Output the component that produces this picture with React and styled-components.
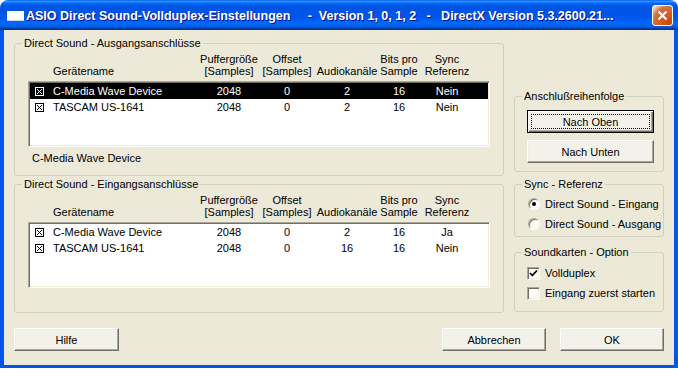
import React from 'react';
import styled, { createGlobalStyle } from 'styled-components';

const GlobalStyle = createGlobalStyle`
  html, body {
    margin: 0;
    padding: 0;
    background: #fff;
  }
  body {
    font-family: "Liberation Sans", Arial, sans-serif;
    font-size: 11px;
    color: #000;
  }
`;

const Window = styled.div`
  width: 678px;
  height: 368px;
  display: flex;
  flex-direction: column;
`;

const TitleBar = styled.div`
  height: 30px;
  flex: none;
  display: flex;
  align-items: center;
  padding: 1px 5px 0 7px;
  box-sizing: border-box;
  border-radius: 8px 8px 0 0;
  background: linear-gradient(to bottom, #0058ee 0%, #3593ff 4%, #288eff 6%, #127dff 8%, #036ffc 10%, #0262ee 14%, #0057e5 20%, #0054e3 24%, #0055eb 56%, #005bf5 66%, #026afe 76%, #0062ef 86%, #0052d6 92%, #0040ab 94%, #003092 100%);
`;

const TitleText = styled.div`
  flex: 1;
  margin-left: 2px;
  color: #fff;
  font-family: "Liberation Sans", Arial, sans-serif;
  font-weight: bold;
  font-size: 12.5px;
  white-space: pre;
  text-shadow: 1px 1px 0 #0f1089;
`;

const CloseButton = styled.div`
  width: 21px;
  height: 21px;
  box-sizing: border-box;
  border: 1px solid #fff;
  border-radius: 3px;
  display: flex;
  align-items: center;
  justify-content: center;
  background: radial-gradient(circle at 90% 90%, #cc4600 0%, #dc6527 55%, #cd7546 70%, #ffccb2 90%, #fff 100%);
`;

const Body = styled.div`
  flex: 1;
  display: flex;
  flex-direction: column;
  background: #ece9d8;
  border: solid #0055ea;
  border-width: 0 4px 3px 4px;
  padding: 7px 10px 14px 10px;
`;

const Main = styled.div`
  display: flex;
  gap: 10px;
  align-items: flex-start;
`;

const LeftColumn = styled.div`
  width: 490px;
  display: flex;
  flex-direction: column;
  gap: 2px;
`;

const RightColumn = styled.div`
  width: 150px;
  display: flex;
  flex-direction: column;
  margin-top: 53px;
`;

const Group = styled.fieldset`
  margin: ${p => p.$mt || 0}px 0 0 0;
  padding: 0;
  min-width: 0;
  border: 1px solid #d0d0bf;
  border-radius: 3px;
`;

const Legend = styled.legend`
  margin-left: 7px;
  padding: 0 2px;
  line-height: 13px;
`;

const GroupBody = styled.div`
  padding: ${p => p.$pad};
  display: flex;
  flex-direction: column;
`;

const columns = '20px 150px 58px 58px 62px 42px 54px';

const HeaderRow = styled.div`
  display: grid;
  grid-template-columns: ${columns};
  align-items: end;
  margin-left: 2px;
  line-height: 12px;
`;

const HeadCell = styled.div`
  text-align: ${p => (p.$left ? 'left' : 'center')};
  padding-left: ${p => (p.$left ? 3 : 0)}px;
  white-space: nowrap;
`;

const ListBox = styled.div`
  margin-top: 4px;
  height: 66px;
  box-sizing: border-box;
  background: #fff;
  border: 1px solid;
  border-color: #aca899 #fff #fff #aca899;
  box-shadow: inset 1px 1px 0 #716f64, inset -1px -1px 0 #f1efe2;
  padding: 1px;
`;

const Row = styled.div`
  display: grid;
  grid-template-columns: ${columns};
  height: 16px;
  line-height: 16px;
  background: ${p => (p.$selected ? '#000' : 'transparent')};
  color: ${p => (p.$selected ? '#fff' : '#000')};
`;

const Cell = styled.div`
  text-align: ${p => (p.$left ? 'left' : 'center')};
  padding-left: ${p => (p.$left ? 3 : 0)}px;
  white-space: nowrap;
`;

const MarkCell = styled.div`
  display: flex;
  align-items: center;
  padding-left: 5px;
`;

const StaticText = styled.div`
  margin: 5px 0 0 4px;
  line-height: 13px;
`;

const Button = styled.button`
  position: relative;
  width: ${p => p.$w}px;
  height: 23px;
  box-sizing: border-box;
  padding: 0;
  font-family: "Liberation Sans", Arial, sans-serif;
  font-size: 11px;
  color: #000;
  background: #f3f2ea;
  border: 1px solid;
  border-color: ${p => (p.$default ? '#000' : '#fff #716f64 #716f64 #fff')};
  box-shadow: ${p =>
    p.$default
      ? 'inset 1px 1px 0 #fff, inset -1px -1px 0 #716f64, inset -2px -2px 0 #aca899'
      : 'inset -1px -1px 0 #aca899, inset 1px 1px 0 #f1efe2'};
  &::after {
    content: '';
    display: ${p => (p.$focus ? 'block' : 'none')};
    position: absolute;
    inset: 3px;
    border: 1px dotted #000;
  }
`;

const ButtonStack = styled.div`
  display: flex;
  flex-direction: column;
  gap: 7px;
`;

const OptionRow = styled.div`
  height: 20px;
  display: flex;
  align-items: center;
  gap: 5px;
  white-space: nowrap;
`;

const RadioCircle = styled.span`
  flex: none;
  width: 12px;
  height: 12px;
  box-sizing: border-box;
  border-radius: 50%;
  background: #fff;
  border: 1px solid;
  border-color: #aca899 #fff #fff #aca899;
  box-shadow: inset 1px 1px 0 #716f64, inset -1px -1px 0 #f1efe2;
  display: flex;
  align-items: center;
  justify-content: center;
  &::after {
    content: '';
    width: 4px;
    height: 4px;
    border-radius: 50%;
    background: ${p => (p.$on ? '#000' : 'transparent')};
  }
`;

const CheckSquare = styled.span`
  flex: none;
  width: 13px;
  height: 13px;
  box-sizing: border-box;
  background: #fff;
  border: 1px solid;
  border-color: #aca899 #fff #fff #aca899;
  box-shadow: inset 1px 1px 0 #716f64, inset -1px -1px 0 #f1efe2;
  display: flex;
  align-items: center;
  justify-content: center;
`;

const Footer = styled.div`
  margin-top: 15px;
  display: flex;
  align-items: center;
`;

const Spacer = styled.div`
  flex: 1;
`;

const FooterGap = styled.div`
  width: 14px;
`;

const BoxMark = () => (
  <svg width="9" height="9" viewBox="0 0 9 9">
    <rect x="0.5" y="0.5" width="8" height="8" fill="none" stroke="currentColor" />
    <path d="M2 2 L7 7 M7 2 L2 7" stroke="currentColor" strokeWidth="1" />
  </svg>
);

const CheckMark = () => (
  <svg width="9" height="9" viewBox="0 0 9 9">
    <path d="M1 4 L3.3 6.5 L8 1.5" fill="none" stroke="#000" strokeWidth="1.8" />
  </svg>
);

const WindowIcon = () => (
  <svg width="17" height="14" viewBox="0 0 17 14">
    <rect x="0" y="2" width="17" height="10" fill="#fff" />
    <rect x="0" y="11" width="17" height="1" fill="#c9d6ee" />
  </svg>
);

const outputs = [
  { name: 'C-Media Wave Device', buf: 2048, offset: 0, ch: 2, bits: 16, sync: 'Nein', selected: true },
  { name: 'TASCAM US-1641', buf: 2048, offset: 0, ch: 2, bits: 16, sync: 'Nein' },
];

const inputs = [
  { name: 'C-Media Wave Device', buf: 2048, offset: 0, ch: 2, bits: 16, sync: 'Ja' },
  { name: 'TASCAM US-1641', buf: 2048, offset: 0, ch: 16, bits: 16, sync: 'Nein' },
];

const DeviceTable = ({ rows }) => (
  <>
    <HeaderRow>
      <HeadCell />
      <HeadCell $left>Gerätename</HeadCell>
      <HeadCell>Puffergröße<br />[Samples]</HeadCell>
      <HeadCell>Offset<br />[Samples]</HeadCell>
      <HeadCell>Audiokanäle</HeadCell>
      <HeadCell>Bits pro<br />Sample</HeadCell>
      <HeadCell>Sync<br />Referenz</HeadCell>
    </HeaderRow>
    <ListBox>
      {rows.map(r => (
        <Row key={r.name} $selected={r.selected}>
          <MarkCell><BoxMark /></MarkCell>
          <Cell $left>{r.name}</Cell>
          <Cell>{r.buf}</Cell>
          <Cell>{r.offset}</Cell>
          <Cell>{r.ch}</Cell>
          <Cell>{r.bits}</Cell>
          <Cell>{r.sync}</Cell>
        </Row>
      ))}
    </ListBox>
  </>
);

const App = () => {
  return (
    <Window>
      <GlobalStyle />
      <TitleBar>
        <WindowIcon />
        <TitleText>{'ASIO Direct Sound-Vollduplex-Einstellungen     -  Version 1, 0, 1, 2   -   DirectX Version 5.3.2600.21...'}</TitleText>
        <CloseButton>
          <svg width="11" height="11" viewBox="0 0 11 11">
            <path d="M1.5 1.5 L9.5 9.5 M9.5 1.5 L1.5 9.5" stroke="#fff" strokeWidth="2" />
          </svg>
        </CloseButton>
      </TitleBar>
      <Body>
        <Main>
          <LeftColumn>
            <Group>
              <Legend>Direct Sound - Ausgangsanschlüsse</Legend>
              <GroupBody $pad="3px 13px 10px 13px">
                <DeviceTable rows={outputs} />
                <StaticText>C-Media Wave Device</StaticText>
              </GroupBody>
            </Group>
            <Group>
              <Legend>Direct Sound - Eingangsanschlüsse</Legend>
              <GroupBody $pad="3px 13px 24px 13px">
                <DeviceTable rows={inputs} />
              </GroupBody>
            </Group>
          </LeftColumn>
          <RightColumn>
            <Group>
              <Legend>Anschlußreihenfolge</Legend>
              <GroupBody $pad="7px 9px 8px 12px">
                <ButtonStack>
                  <Button $w={127} $default $focus>Nach Oben</Button>
                  <Button $w={127}>Nach Unten</Button>
                </ButtonStack>
              </GroupBody>
            </Group>
            <Group $mt={6}>
              <Legend>Sync - Referenz</Legend>
              <GroupBody $pad="3px 0 2px 13px">
                <OptionRow><RadioCircle $on />Direct Sound - Eingang</OptionRow>
                <OptionRow><RadioCircle />Direct Sound - Ausgang</OptionRow>
              </GroupBody>
            </Group>
            <Group $mt={9}>
              <Legend>Soundkarten - Option</Legend>
              <GroupBody $pad="4px 0 8px 12px">
                <OptionRow><CheckSquare><CheckMark /></CheckSquare>Vollduplex</OptionRow>
                <OptionRow><CheckSquare />Eingang zuerst starten</OptionRow>
              </GroupBody>
            </Group>
          </RightColumn>
        </Main>
        <Footer>
          <Button $w={105}>Hilfe</Button>
          <Spacer />
          <Button $w={104}>Abbrechen</Button>
          <FooterGap />
          <Button $w={104}>OK</Button>
        </Footer>
      </Body>
    </Window>
  );
};

export default App;
